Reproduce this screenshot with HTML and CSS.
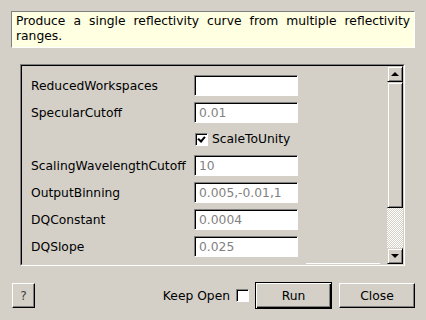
FILE: index.html
```html
<!DOCTYPE html>
<html lang="en">
<head>
    <meta charset="UTF-8">
    <title>Stitch1DMany</title>
    <link rel="stylesheet" href="styles.css">
</head>
<body>
    <div class="desc">Produce a single reflectivity curve from multiple reflectivity ranges.</div>

    <div class="scroll">
        <div class="scroll-inner">
            <div class="rows">
                <div class="row">
                    <span class="label">ReducedWorkspaces</span>
                    <span class="field"></span>
                </div>
                <div class="row">
                    <span class="label">SpecularCutoff</span>
                    <span class="field">0.01</span>
                </div>
                <div class="row row-check">
                    <span class="label"></span>
                    <span class="check checked"></span>
                    <span class="check-text">ScaleToUnity</span>
                </div>
                <div class="row">
                    <span class="label">ScalingWavelengthCutoff</span>
                    <span class="field">10</span>
                </div>
                <div class="row">
                    <span class="label">OutputBinning</span>
                    <span class="field">0.005,-0.01,1</span>
                </div>
                <div class="row">
                    <span class="label">DQConstant</span>
                    <span class="field">0.0004</span>
                </div>
                <div class="row">
                    <span class="label">DQSlope</span>
                    <span class="field">0.025</span>
                </div>
                <div class="row">
                    <span class="cut"></span>
                </div>
            </div>
            <div class="vbar">
                <div class="arrow up"><span></span></div>
                <div class="slider"></div>
                <div class="trough"></div>
                <div class="arrow down"><span></span></div>
            </div>
        </div>
    </div>

    <div class="footer">
        <button class="btn help">?</button>
        <div class="spacer"></div>
        <span class="keep">Keep Open</span>
        <span class="check"></span>
        <button class="btn run">Run</button>
        <button class="btn close">Close</button>
    </div>
</body>
</html>
```

FILE: styles.css
```css
html, body {
    margin: 0;
    padding: 0;
}
body {
    width: 426px;
    height: 320px;
    overflow: hidden;
    background: #d4d0c8;
    font-family: "DejaVu Sans", sans-serif;
    font-size: 12.3px;
    color: #000;
}
.desc {
    margin: 11px 11px 0 11px;
    height: 37px;
    box-sizing: border-box;
    padding: 2px 4px 0 4px;
    background: #ffffe1;
    border: 1px solid;
    border-color: #808080 #fff #fff #808080;
    text-align: justify;
    line-height: 15px;
}
.scroll {
    margin: 16px 21px 0 20px;
    height: 202px;
    box-sizing: border-box;
    border: 1px solid;
    border-color: #808080 #fff #fff #808080;
}
.scroll-inner {
    height: 100%;
    box-sizing: border-box;
    border: 1px solid;
    border-color: #000 #d4d0c8 #d4d0c8 #000;
    display: flex;
    overflow: hidden;
}
.rows {
    flex: 1;
    padding: 9px 0 0 9px;
    display: flex;
    flex-direction: column;
    gap: 6px;
}
.row {
    display: flex;
    align-items: center;
    height: 21px;
    flex-shrink: 0;
}
.row-check {
    height: 20px;
}
.label {
    width: 163px;
    flex-shrink: 0;
}
.field {
    width: 104px;
    height: 21px;
    box-sizing: border-box;
    border: 1px solid;
    border-color: #808080 #fff #fff #808080;
    box-shadow: inset 1px 1px 0 #000;
    background: #fff;
    color: #808080;
    padding: 2px 0 0 4px;
    line-height: 16px;
}
.check {
    width: 13px;
    height: 13px;
    box-sizing: border-box;
    border: 1px solid;
    border-color: #808080 #fff #fff #808080;
    box-shadow: inset 1px 1px 0 #000;
    background: #fff;
    position: relative;
    flex-shrink: 0;
}
.row .check {
    margin-left: 1px;
}
.check.checked::after {
    content: "";
    position: absolute;
    left: 2px;
    top: 2px;
    width: 5px;
    height: 3px;
    border-left: 2px solid #000;
    border-bottom: 2px solid #000;
    transform: rotate(-50deg);
    transform-origin: center;
}
.check-text {
    margin-left: 4px;
}
.cut {
    margin-left: 275px;
    width: 74px;
    height: 21px;
    border-top: 1px solid #fff;
    align-self: flex-start;
}
.vbar {
    width: 16px;
    display: flex;
    flex-direction: column;
    flex-shrink: 0;
}
.arrow {
    height: 16px;
    box-sizing: border-box;
    border: 1px solid;
    border-color: #d4d0c8 #000 #000 #d4d0c8;
    box-shadow: inset 1px 1px 0 #fff, inset -1px -1px 0 #808080;
    display: flex;
    align-items: center;
    justify-content: center;
}
.arrow span {
    width: 0;
    height: 0;
    border-left: 4px solid transparent;
    border-right: 4px solid transparent;
}
.arrow.up span {
    border-bottom: 4px solid #000;
}
.arrow.down span {
    border-top: 4px solid #000;
}
.slider {
    height: 126px;
    box-sizing: border-box;
    border: 1px solid;
    border-color: #d4d0c8 #000 #000 #d4d0c8;
    box-shadow: inset 1px 1px 0 #fff, inset -1px -1px 0 #808080;
}
.trough {
    flex: 1;
    background-color: #d4d0c8;
    background-image: conic-gradient(#fff 25%, #d4d0c8 0 50%, #fff 0 75%, #d4d0c8 0);
    background-size: 2px 2px;
}
.footer {
    margin-top: 16px;
    padding: 0 11px 0 12px;
    height: 27px;
    display: flex;
    align-items: center;
}
.spacer {
    flex: 1;
}
.btn {
    font-family: "DejaVu Sans", sans-serif;
    font-size: 12.3px;
    color: #000;
    background: #d4d0c8;
    box-sizing: border-box;
    border: 1px solid;
    border-color: #fff #000 #000 #fff;
    box-shadow: inset -1px -1px 0 #808080;
    padding: 0;
    margin: 0;
}
.help {
    width: 23px;
    height: 25px;
    color: #404040;
}
.keep {
    margin-right: 6px;
}
.run {
    margin-left: 6px;
    width: 77px;
    height: 27px;
    border-color: #000;
    box-shadow: inset 1px 1px 0 #fff, inset -1px -1px 0 #000, inset -2px -2px 0 #808080;
}
.close {
    margin-left: 7px;
    width: 76px;
    height: 25px;
}
```
